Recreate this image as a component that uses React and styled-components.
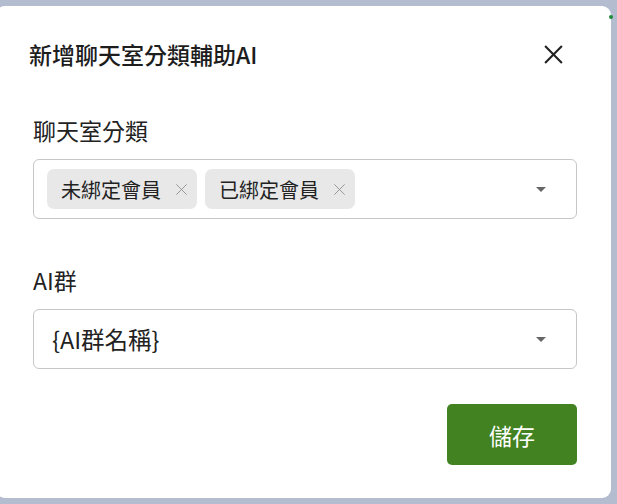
import React from "react";
import styled, { createGlobalStyle } from "styled-components";

const Global = createGlobalStyle`
  html, body {
    margin: 0;
    padding: 0;
    background: #b4bccf;
    font-family: "Noto Sans CJK TC", "Noto Sans", sans-serif;
  }
`;

const Page = styled.div`
  width: 617px;
  height: 504px;
  overflow: hidden;
  padding-top: 6px;
  box-sizing: border-box;
`;

const Card = styled.div`
  position: relative;
  margin-left: -4px;
  width: 615px;
  height: 492px;
  background: #fff;
  border-radius: 9px;
  box-sizing: border-box;
  padding: 26px 34px 0 37px;
  display: flex;
  flex-direction: column;
`;

const Dot = styled.span`
  position: absolute;
  right: -2px;
  top: 9px;
  width: 4px;
  height: 4px;
  border-radius: 50%;
  background: #1f8a3a;
`;

const Header = styled.div`
  display: flex;
  align-items: center;
  justify-content: space-between;
  height: 44px;
`;

const Title = styled.h2`
  margin: 0 0 0 -4px;
  font-size: 23px;
  font-weight: 500;
  color: #1d1d1d;
`;

const Close = styled.button`
  border: none;
  background: none;
  padding: 0;
  margin-right: 12px;
  width: 24px;
  height: 24px;
  display: flex;
  align-items: center;
  justify-content: center;
  cursor: pointer;
`;

const Label = styled.div`
  font-size: 23px;
  color: #222;
  line-height: 28px;
  margin-top: ${(p) => p.$top}px;
`;

const Select = styled.div`
  margin-top: 15px;
  height: 60px;
  border: 1px solid #c6c6c6;
  border-radius: 6px;
  box-sizing: border-box;
  display: flex;
  align-items: center;
  padding: 0 30px 0 13px;
  gap: 8px;
`;

const Chip = styled.div`
  height: 40px;
  width: 150px;
  box-sizing: border-box;
  background: #e8e8e8;
  border-radius: 7px;
  display: flex;
  align-items: center;
  justify-content: space-between;
  padding: 0 9px 0 14px;
  font-size: 20px;
  color: #222;
`;

const ChipX = styled.span`
  display: flex;
`;

const Value = styled.div`
  flex: 1;
  font-size: 23.5px;
  color: #222;
  padding-left: 5px;
`;

const Caret = styled.span`
  margin-left: auto;
  width: 0;
  height: 0;
  border-left: 5.5px solid transparent;
  border-right: 5.5px solid transparent;
  border-top: 5.5px solid #666;
`;

const Footer = styled.div`
  display: flex;
  justify-content: flex-end;
  margin-top: 35px;
`;

const SaveButton = styled.button`
  width: 130px;
  height: 61px;
  border: none;
  border-radius: 5px;
  background: #428221;
  color: #fff;
  font-family: inherit;
  font-size: 23px;
  cursor: pointer;
`;

const XIcon = ({ size, stroke, color }) => (
  <svg width={size} height={size} viewBox="0 0 20 20">
    <path d="M2 2L18 18M18 2L2 18" stroke={color} strokeWidth={stroke} />
  </svg>
);

const tags = ["未綁定會員", "已綁定會員"];

export default function App() {
  return (
    <Page>
      <Global />
      <Card>
        <Dot />
        <Header>
          <Title>新增聊天室分類輔助AI</Title>
          <Close>
            <XIcon size={21} stroke={2} color="#222" />
          </Close>
        </Header>
        <Label $top={40}>聊天室分類</Label>
        <Select>
          {tags.map((t) => (
            <Chip key={t}>
              {t}
              <ChipX>
                <XIcon size={13} stroke={1.3} color="#8a8a8a" />
              </ChipX>
            </Chip>
          ))}
          <Caret />
        </Select>
        <Label $top={47}>AI群</Label>
        <Select>
          <Value>{"{AI群名稱}"}</Value>
          <Caret />
        </Select>
        <Footer>
          <SaveButton>儲存</SaveButton>
        </Footer>
      </Card>
    </Page>
  );
}
